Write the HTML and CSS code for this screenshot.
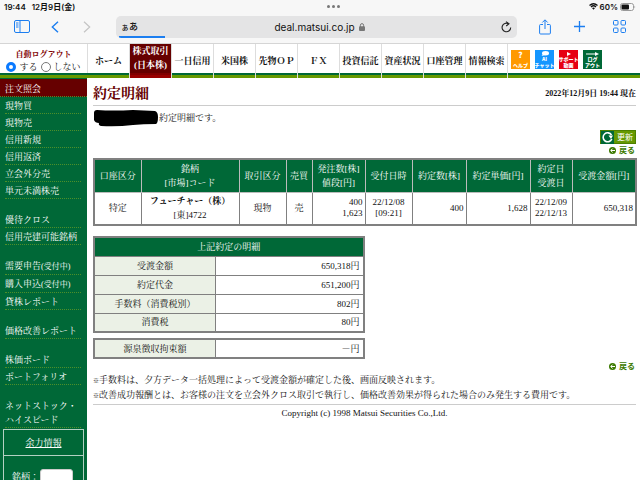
FILE: index.html
```html
<!DOCTYPE html>
<html lang="ja">
<head>
    <meta charset="UTF-8">
    <meta name="viewport" content="width=device-width, initial-scale=1.0">
    <title>約定明細</title>
    <link rel="stylesheet" href="styles.css">
</head>
<body>
    <header class="browser">
        <div class="status">
            <span class="time">19:44</span>
            <span>12月9日(金)</span>
            <span class="dots"><i></i><i></i><i></i></span>
            <span class="battery">
                <svg width="9" height="7" viewBox="0 0 18 14"><path d="M1 5Q9-2 17 5M4 8Q9 3 14 8" fill="none" stroke="#111" stroke-width="2.6"/><path d="M6 10Q9 7.500 12 10L9 13.500Z" fill="#111"/></svg>
                60%
                <svg width="16" height="8" viewBox="0 0 16 8"><rect x=".5" y=".5" width="13" height="7" rx="2" fill="none" stroke="#999"/><rect x="1.500" y="1.500" width="7.500" height="5" rx="1" fill="#111"/><path d="M14.500 2.500Q16 4 14.500 5.500Z" fill="#999"/></svg>
            </span>
        </div>
        <div class="toolbar">
            <button class="tool" aria-label="サイドバー"><svg width="16" height="13" viewBox="0 0 16 13"><rect x=".5" y=".5" width="15" height="12" rx="1.500"/><path d="M6 .5V12.500M2 3H4.500M2 5H4.500M2 7H4.500"/></svg></button>
            <button class="tool back" aria-label="戻る"><svg width="8" height="12" viewBox="0 0 8 12"><path d="M7 .7L1.300 6L7 11.300" stroke-width="1.400"/></svg></button>
            <button class="tool next" aria-label="進む"><svg width="8" height="12" viewBox="0 0 8 12"><path d="M1 .7L6.700 6L1 11.300" stroke-width="1.200"/></svg></button>
            <div class="address">
                <button class="reader"><small>ぁ</small>あ</button>
                <span class="url">deal.matsui.co.jp
                    <svg width="6" height="8" viewBox="0 0 6 8"><path d="M1.400 4V2.300Q1.400.6 3 .6T4.600 2.300V4" fill="none" stroke="#777"/><rect y="3.300" width="6" height="4.700" rx="1" fill="#777"/></svg>
                </span>
                <button class="reload" aria-label="再読み込み"><svg width="11" height="12" viewBox="0 0 11 12"><path d="M7.500 2.700A4.300 4.300 0 1 0 9.700 6.500" fill="none" stroke="#222" stroke-width="1.100"/><path d="M5 .6L8 2.800L5.200 5" fill="none" stroke="#222" stroke-width="1.100"/></svg></button>
            </div>
            <button class="tool share" aria-label="共有"><svg width="12" height="16" viewBox="0 0 12 16"><path d="M4 5.500H1.500Q.6 5.500.6 6.500V14Q.6 15 1.600 15H10.400Q11.400 15 11.400 14V6.500Q11.400 5.500 10.500 5.500H8M6 10V1M3.300 3.500L6 .8L8.700 3.500"/></svg></button>
            <button class="tool plus" aria-label="新規タブ"><svg width="11" height="11" viewBox="0 0 11 11"><path d="M5.500 0V11M0 5.500H11" stroke-width="1.300"/></svg></button>
            <button class="tool" aria-label="タブ一覧"><svg width="13" height="13" viewBox="0 0 13 13"><rect x=".5" y=".5" width="4.500" height="4.500" rx="1"/><rect x="8" y=".5" width="4.500" height="4.500" rx="1"/><rect x=".5" y="8" width="4.500" height="4.500" rx="1"/><rect x="8" y="8" width="4.500" height="4.500" rx="1"/></svg></button>
        </div>
    </header>

    <nav class="gnav">
        <fieldset class="logout">
            <legend>自動ログアウト</legend>
            <label><input type="radio" name="auto" checked>する</label>
            <label><input type="radio" name="auto">しない</label>
        </fieldset>
        <a class="tab" href="#">ホーム</a>
        <a class="tab active" href="#">株式取引<br>(日本株)</a>
        <a class="tab" href="#">一日信用</a>
        <a class="tab" href="#">米国株</a>
        <a class="tab" href="#">先物ＯＰ</a>
        <a class="tab" href="#">ＦＸ</a>
        <a class="tab" href="#">投資信託</a>
        <a class="tab" href="#">資産状況</a>
        <a class="tab" href="#">口座管理</a>
        <a class="tab" href="#">情報検索</a>
        <div class="shortcuts">
            <a class="help" href="#"><b>?</b><span>ヘルプ</span></a>
            <a class="chat" href="#"><svg width="8" height="5" viewBox="0 0 8 5"><ellipse cx="4.500" cy="2.200" rx="3.500" ry="2.200"/><path d="M2 3L.5 5L4 4Z"/></svg><span>AI</span><span>チャット</span></a>
            <a class="support" href="#"><svg width="4" height="4" viewBox="0 0 4 4"><path d="M0 0L4 2L0 4Z"/></svg><span>サポート</span><span>動画</span></a>
            <a class="exit" href="#"><svg width="13" height="4" viewBox="0 0 13 4"><path d="M0 1.500H9V0L13 2L9 4V2.500H0Z"/></svg><span>ログ</span><span>アウト</span></a>
        </div>
    </nav>

    <div class="page">
        <aside class="side">
            <ul>
                <li class="current"><a href="#">注文照会</a></li>
                <li><a href="#">現物買</a></li>
                <li><a href="#">現物売</a></li>
                <li><a href="#">信用新規</a></li>
                <li><a href="#">信用返済</a></li>
                <li><a href="#">立会外分売</a></li>
                <li><a href="#">単元未満株売</a></li>
            </ul>
            <ul>
                <li><a href="#">優待クロス</a></li>
                <li><a href="#">信用売建可能銘柄</a></li>
            </ul>
            <ul>
                <li><a href="#">需要申告<small>(受付中)</small></a></li>
                <li><a href="#">購入申込<small>(受付中)</small></a></li>
                <li><a href="#">貸株レポート</a></li>
            </ul>
            <ul>
                <li><a href="#">価格改善レポート</a></li>
            </ul>
            <ul>
                <li><a href="#">株価ボード</a></li>
                <li><a href="#">ポートフォリオ</a></li>
            </ul>
            <ul>
                <li><a href="#">ネットストック・<br>ハイスピード</a></li>
            </ul>
            <div class="power">
                <a href="#">余力情報</a>
                <div class="search"><label for="code">銘柄：</label><input type="text" id="code"></div>
            </div>
        </aside>

        <main class="main">
            <div class="title">
                <h1>約定明細</h1>
                <span>2022年12月9日 19:44 現在</span>
            </div>
            <p class="lead">
                <svg width="66" height="18" viewBox="0 0 66 18"><path d="M4 1Q20 2 40 1L62 2Q65 3 65 8Q65 14 63 15Q50 15 40 16Q24 18 8 17Q5 16 6 14Q2 14 1 11V4Q1 1 4 1Z"/></svg>約定明細です。
            </p>
            <div class="actions">
                <button class="update"><svg width="13" height="13" viewBox="0 0 13 13"><rect width="13" height="13" fill="#006837"/><path d="M10.500 4A4.500 4.500 0 1 0 10.800 8" fill="none" stroke="#fff" stroke-width="1.600"/><path d="M7.500 4.500H12L10 8Z" fill="#fff"/></svg>更新</button>
                <a class="return" href="#"><svg width="7" height="7" viewBox="0 0 7 7"><circle cx="3.500" cy="3.500" r="3.500" fill="#3c7a00"/><path d="M6 3.500H2M3.600 1.600L1.700 3.500L3.600 5.400" fill="none" stroke="#fff"/></svg>戻る</a>
            </div>

            <table class="orders">
                <colgroup>
                    <col class="w-mid"><col class="w-name"><col class="w-mid"><col class="w-side"><col class="w-qty"><col class="w-mid"><col class="w-num"><col class="w-price"><col class="w-date"><col class="w-price">
                </colgroup>
                <thead>
                    <tr>
                        <th>口座区分</th>
                        <th>銘柄<br>[市場]コード</th>
                        <th>取引区分</th>
                        <th>売買</th>
                        <th>発注数[株]<br>値段[円]</th>
                        <th>受付日時</th>
                        <th>約定数[株]</th>
                        <th>約定単価[円]</th>
                        <th>約定日<br>受渡日</th>
                        <th>受渡金額[円]</th>
                    </tr>
                </thead>
                <tbody>
                    <tr>
                        <td>特定</td>
                        <td class="name"><b>フューチャー（株）</b><br>[東]4722</td>
                        <td>現物</td>
                        <td>売</td>
                        <td class="num">400<br>1,623</td>
                        <td>22/12/08<br>[09:21]</td>
                        <td class="num">400</td>
                        <td class="num">1,628</td>
                        <td>22/12/09<br>22/12/13</td>
                        <td class="num">650,318</td>
                    </tr>
                </tbody>
            </table>

            <table class="detail">
                <colgroup><col class="w-label"><col></colgroup>
                <thead>
                    <tr><th colspan="2">上記約定の明細</th></tr>
                </thead>
                <tbody>
                    <tr><th>受渡金額</th><td>650,318円</td></tr>
                    <tr><th>約定代金</th><td>651,200円</td></tr>
                    <tr><th>手数料（消費税別）</th><td>802円</td></tr>
                    <tr><th>消費税</th><td>80円</td></tr>
                </tbody>
            </table>
            <table class="detail tax">
                <colgroup><col class="w-label"><col></colgroup>
                <tbody>
                    <tr><th>源泉徴収拘束額</th><td>－円</td></tr>
                </tbody>
            </table>

            <div class="actions bottom">
                <a class="return" href="#"><svg width="7" height="7" viewBox="0 0 7 7"><circle cx="3.500" cy="3.500" r="3.500" fill="#3c7a00"/><path d="M6 3.500H2M3.600 1.600L1.700 3.500L3.600 5.400" fill="none" stroke="#fff"/></svg>戻る</a>
            </div>
            <div class="notes">
                <p><small>※</small>手数料は、夕方データ一括処理によって受渡金額が確定した後、画面反映されます。</p>
                <p><small>※</small>改善成功報酬とは、お客様の注文を立会外クロス取引で執行し、価格改善効果が得られた場合のみ発生する費用です。</p>
            </div>
            <footer>Copyright (c) 1998 Matsui Securities Co.,Ltd.</footer>
        </main>
    </div>
</body>
</html>
```

FILE: styles.css
```css
* {
    box-sizing: border-box;
}
body {
    margin: 0;
    height: 100vh;
    overflow: hidden;
    display: flex;
    flex-direction: column;
    background: #fff;
    color: #111;
    font-family: "Liberation Serif", "Noto Serif CJK JP", "Noto Sans CJK JP", serif;
    font-size: 9px;
    line-height: 14px;
}
a {
    color: inherit;
    text-decoration: none;
}
button {
    padding: 0;
    border: 0;
    background: none;
    font: inherit;
    color: inherit;
    cursor: pointer;
}
svg {
    display: block;
    flex: none;
}
ul, h1, p {
    margin: 0;
    padding: 0;
    list-style: none;
}

/* browser bar */
.browser {
    flex: none;
    background: #f7f7f7;
    border-bottom: 1px solid #d5d5d5;
    font-family: Inter, "Noto Sans CJK JP", sans-serif;
    color: #111;
}
.status {
    display: grid;
    grid-template-columns: auto 1fr auto 1fr;
    align-items: center;
    height: 13px;
    padding: 0 4px;
    font-size: 8px;
    font-weight: 600;
    line-height: 12px;
}
.time {
    margin-right: 6px;
}
.dots {
    display: flex;
    gap: 2px;
}
.dots i {
    width: 3px;
    height: 3px;
    border-radius: 50%;
    background: #777;
}
.battery {
    display: flex;
    align-items: center;
    justify-content: flex-end;
    gap: 2px;
}
.toolbar {
    display: flex;
    align-items: center;
    height: 30px;
    padding: 0 14px 3px;
}
.tool svg {
    fill: none;
    stroke: #1c7ef0;
}
.back {
    margin-left: 21px;
}
.next {
    margin: 0 25px 0 24px;
}
.next svg {
    stroke: #c4c4c4;
}
.address {
    display: flex;
    align-items: center;
    justify-content: space-between;
    flex: 1;
    height: 22px;
    padding: 0 5px;
    border-radius: 5px;
    background: linear-gradient(#1c7ef0, #1c7ef0) 3px 100% / 46px 2px no-repeat #e4e4e5;
}
.reader {
    font-size: 9px;
    font-weight: 500;
}
.reader small {
    font-size: 8px;
}
.url {
    display: flex;
    align-items: center;
    gap: 4px;
    font-size: 10px;
}
.share {
    margin-left: 22px;
}
.plus {
    margin: 0 28px 0 23px;
}

/* global navigation */
.gnav {
    display: flex;
    flex: none;
    height: 34px;
    background: linear-gradient(#fff 29px, #006837 29px, #006837 31px, #669900 31px);
}
.logout {
    display: flex;
    flex-wrap: wrap;
    justify-content: center;
    align-content: flex-end;
    gap: 0 3px;
    width: 88px;
    height: 29px;
    margin: 0;
    padding: 0;
    border: 0;
    border-right: 1px solid #ddd;
    line-height: 12px;
}
.logout legend {
    float: left;
    width: 100%;
    padding: 4px 0 0;
    text-align: center;
    font-size: 8px;
    font-weight: bold;
    color: #800000;
}
.logout label {
    display: flex;
    align-items: center;
    gap: 3px;
}
.logout input {
    appearance: none;
    width: 10px;
    height: 10px;
    margin: 0;
    border: 1px solid #777;
    border-radius: 50%;
    background: #fff;
}
.logout input:checked {
    border: 3px solid #0a7aff;
}
.tab {
    display: flex;
    align-items: center;
    justify-content: center;
    width: 42px;
    border-right: 1px solid #ddd;
    font-weight: bold;
    text-align: center;
    white-space: nowrap;
}
.tab.active {
    align-items: flex-start;
    background: linear-gradient(#660000 29px, #800000 29px, #800000 31px, #990000 31px);
    color: #fff;
}
.shortcuts {
    display: flex;
    gap: 5px;
    padding: 6px 0 0 3px;
}
.shortcuts a {
    display: flex;
    flex-direction: column;
    align-items: center;
    justify-content: center;
    width: 19px;
    height: 19px;
    overflow: hidden;
    color: #fff;
    font-family: "Noto Sans CJK JP", sans-serif;
    font-size: 5px;
    font-weight: 900;
    line-height: 6px;
    white-space: nowrap;
}
.shortcuts svg {
    fill: #fff;
}
.shortcuts b {
    font-size: 8px;
    line-height: 10px;
}
.shortcuts .help span {
    line-height: 9px;
}
.help {
    background: #ff9900;
}
.chat {
    background: #1496ff;
}
.support {
    background: #e60012;
}
.exit {
    background: #006837;
}

/* side menu */
.page {
    display: flex;
    flex: 1;
    min-height: 0;
}
.side {
    flex: none;
    width: 87px;
    padding-top: 1px;
    overflow: hidden;
    background: #006837;
    color: #fff;
}
.side ul {
    padding: 0 6px 0 5px;
}
.side ul + ul {
    padding-top: 12px;
}
.side li {
    padding: 2px 0 0;
    border-bottom: 1px dotted #4d8f2a;
    white-space: nowrap;
}
.side .current {
    margin: 0 -6px 0 -5px;
    padding: 3px 6px 0 5px;
    background: #660000;
}
.side small {
    font-size: 8px;
}
.power {
    margin: 1px 3px 0;
    border: 1px solid #b3d1c2;
}
.power > a {
    display: block;
    padding: 6px 0 5px;
    border-bottom: 1px solid #b3d1c2;
    text-align: center;
    text-decoration: underline;
}
.search {
    display: flex;
    align-items: center;
    gap: 1px;
    padding: 13px 9px 20px 8px;
}
.search input {
    width: 33px;
    height: 15px;
    border: 1px solid #ccc;
    border-radius: 3px;
    background: #fff;
}

/* contents */
.main {
    flex: 1;
    min-width: 0;
    padding: 8px 4px 0 6px;
}
.title {
    display: flex;
    align-items: center;
    justify-content: space-between;
    padding-bottom: 3px;
    border-bottom: 1px solid #ccc;
}
.title h1 {
    font-size: 14px;
    line-height: 16px;
    color: #660000;
}
.title span {
    font-size: 8px;
    font-weight: bold;
}
.lead {
    display: flex;
    align-items: center;
    padding-top: 3px;
}
.actions {
    display: flex;
    flex-direction: column;
    align-items: flex-end;
    gap: 2px;
    padding-top: 3px;
    font-family: "Noto Sans CJK JP", sans-serif;
}
.update {
    display: flex;
    align-items: center;
    gap: 3px;
    width: 36px;
    height: 14px;
    border: 1px solid #4d8000;
    background: #669900;
    color: #fff;
    font-size: 8px;
    line-height: 12px;
}
.return {
    display: flex;
    align-items: center;
    gap: 3px;
    padding-right: 1px;
    color: #3c7a00;
    font-size: 8px;
    font-weight: bold;
    line-height: 8px;
}
table {
    border-collapse: collapse;
    table-layout: fixed;
    border: 2px solid #808080;
}
th, td {
    padding: 0 3px;
    border: 1px solid #808080;
    font-weight: normal;
    text-align: center;
    white-space: nowrap;
}
thead th {
    background: #006837;
    color: #fff;
}
.orders {
    width: 100%;
    margin-top: 4px;
}
.orders th, .orders td {
    height: 33px;
    padding: 0 2px;
}
.orders th {
    border-color: #bbb;
}
.orders td {
    line-height: 11px;
}
.orders .name {
    line-height: 14px;
}
.orders .num, .detail td {
    text-align: right;
}
.w-mid { width: 47px; }
.w-name { width: 98px; }
.w-side { width: 26px; }
.w-qty { width: 53px; }
.w-num { width: 54px; }
.w-price { width: 64px; }
.w-date { width: 42px; }
.w-label { width: 45%; }
.detail {
    width: 50%;
    margin-top: 10px;
}
.detail th, .detail td {
    height: 19px;
}
.detail tbody th {
    background: #ebf1e6;
}
.tax {
    margin-top: 5px;
}
.bottom {
    padding-top: 3px;
}
.notes {
    padding: 3px 0 1px;
    border-bottom: 1px solid #ccc;
    white-space: nowrap;
}
.notes small {
    font-size: 6px;
}
footer {
    padding-top: 1px;
    text-align: center;
}
```
